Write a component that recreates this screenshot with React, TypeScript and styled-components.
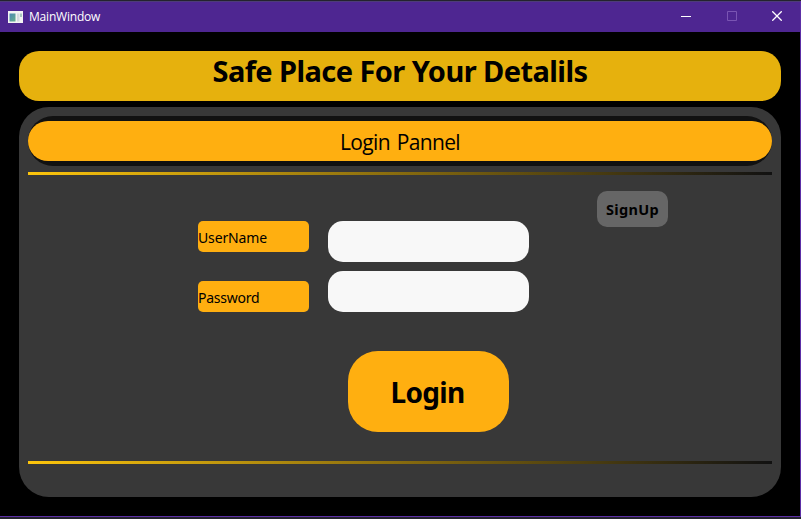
import React from "react";
import styled, { createGlobalStyle } from "styled-components";

const GlobalStyle = createGlobalStyle`
  * { box-sizing: border-box; }
  body { margin: 0; background: #22222b; overflow: hidden; }
`;

const Desktop = styled.div`
  width: 801px;
  height: 519px;
  padding-top: 1px;
  background: #24232d;
  font-family: "Noto Sans", "Open Sans", sans-serif;
  color: #000;
`;

const Window = styled.div`
  height: 516px;
  border: solid #5c2fa6;
  border-width: 0 1px 1px 0;
  background: #000;
`;

const TitleBar = styled.header`
  display: flex;
  align-items: center;
  height: 31px;
  padding-left: 8px;
  background: #4e2691;
  border-top: 1px solid #4d3c78;
  color: #fff;
`;

const WindowTitle = styled.span`
  flex: 1;
  padding-left: 6px;
  font: 12px/20px "Open Sans", sans-serif;
  letter-spacing: -0.2px;
`;

const Control = styled.span<{ $dim?: boolean }>`
  display: grid;
  place-items: center;
  width: ${(p) => (p.$dim ? 45 : 46)}px;
  height: 30px;
  padding-bottom: 2px;
  color: ${(p) => (p.$dim ? "#7a55b3" : "#fff")};
`;

const Content = styled.main`
  display: flex;
  flex-direction: column;
  gap: 6px;
  padding: 19px 19px 0;
`;

const Banner = styled.h1`
  height: 50px;
  margin: 0;
  border-radius: 20px;
  background: #e6b10d;
  text-align: center;
  font-size: 29px;
  font-weight: 700;
  line-height: 39px;
  letter-spacing: -0.57px;
`;

const Panel = styled.section`
  height: 390px;
  padding: 9px 9px 0;
  border-radius: 30px;
  background: #383838;
`;

const PanelHeader = styled.div`
  padding: 5px 0;
  border-radius: 25px;
  background: #111;
`;

const PanelTitle = styled.h2`
  height: 40px;
  margin: 0;
  border-radius: 20px;
  background: #ffaf10;
  text-align: center;
  font-family: "Open Sans", sans-serif;
  font-size: 21px;
  font-weight: 400;
  line-height: 43px;
  letter-spacing: -0.65px;
  word-spacing: 2px;
`;

const Rule = styled.div`
  height: 3px;
  margin-top: 6px;
  background: linear-gradient(90deg, #fdc50c, #111);
`;

const FormArea = styled.form`
  display: grid;
  grid-template-columns: 111px 201px 71px;
  column-gap: 19px;
  height: 280px;
  padding: 16px 0 0 170px;
  align-items: start;
  align-content: start;
`;

const Labels = styled.div`
  display: grid;
  gap: 29px;
  padding-top: 30px;
`;

const FieldLabel = styled.label<{ $tracking: number }>`
  height: 31px;
  border-radius: 5px;
  background: #ffaf10;
  font-size: 14px;
  line-height: 33px;
  letter-spacing: ${(p) => p.$tracking}px;
`;

const Inputs = styled.div`
  display: grid;
  gap: 9px;
  padding-top: 30px;
`;

const Field = styled.input`
  width: 201px;
  height: 41px;
  padding: 0 12px;
  border: 0;
  border-radius: 15px;
  outline: 0;
  background: #f8f8f8;
`;

const Button = styled.button`
  padding: 0;
  border: 0;
  font-family: inherit;
  font-weight: 700;
  color: #000;
`;

const SignUpButton = styled(Button)`
  width: 71px;
  height: 36px;
  margin-left: 49px;
  border-radius: 10px;
  background: #666;
  font-size: 14.5px;
  letter-spacing: 0.3px;
`;

const LoginButton = styled(Button)`
  grid-column: 2;
  width: 161px;
  height: 81px;
  margin: 39px 0 0 20px;
  padding-right: 2px;
  border-radius: 30px;
  background: #ffaf10;
  font-size: 28px;
  letter-spacing: -0.7px;
`;

const AppIcon = () => (
  <svg width="15" height="12" viewBox="0 0 15 12">
    <defs>
      <linearGradient id="pane" x1="0" y1="0" x2="1" y2="1">
        <stop offset="0" stopColor="#4c86b5" />
        <stop offset="1" stopColor="#67b08a" />
      </linearGradient>
    </defs>
    <rect width="15" height="12" fill="#f3f3f3" />
    <rect x="1.5" y="2.5" width="6" height="8" fill="url(#pane)" />
    <rect x="9" y="2.5" width="2.5" height="8" fill="#d4dadf" />
    <rect x="12" y="2.5" width="2" height="3.5" fill="#a8c8bd" />
  </svg>
);

export default function App() {
  return (
    <Desktop>
      <GlobalStyle />
      <Window>
        <TitleBar>
          <AppIcon />
          <WindowTitle>MainWindow</WindowTitle>
          <Control>
            <svg width="10" height="10"><path d="M0 5.5h10" stroke="currentColor" /></svg>
          </Control>
          <Control $dim>
            <svg width="10" height="10"><path d="M.5.5h9v9h-9z" fill="none" stroke="currentColor" /></svg>
          </Control>
          <Control>
            <svg width="10" height="10"><path d="M.3.3l9.4 9.4M9.7.3L.3 9.7" stroke="currentColor" strokeWidth="1.3" /></svg>
          </Control>
        </TitleBar>
        <Content>
          <Banner>Safe Place For Your Detalils</Banner>
          <Panel>
            <PanelHeader>
              <PanelTitle>Login Pannel</PanelTitle>
            </PanelHeader>
            <Rule />
            <FormArea onSubmit={(e) => e.preventDefault()}>
              <Labels>
                <FieldLabel htmlFor="username" $tracking={-0.15}>UserName</FieldLabel>
                <FieldLabel htmlFor="password" $tracking={-0.25}>Password</FieldLabel>
              </Labels>
              <Inputs>
                <Field id="username" />
                <Field id="password" type="password" />
              </Inputs>
              <SignUpButton type="button">SignUp</SignUpButton>
              <LoginButton type="submit">Login</LoginButton>
            </FormArea>
            <Rule />
          </Panel>
        </Content>
      </Window>
    </Desktop>
  );
}
